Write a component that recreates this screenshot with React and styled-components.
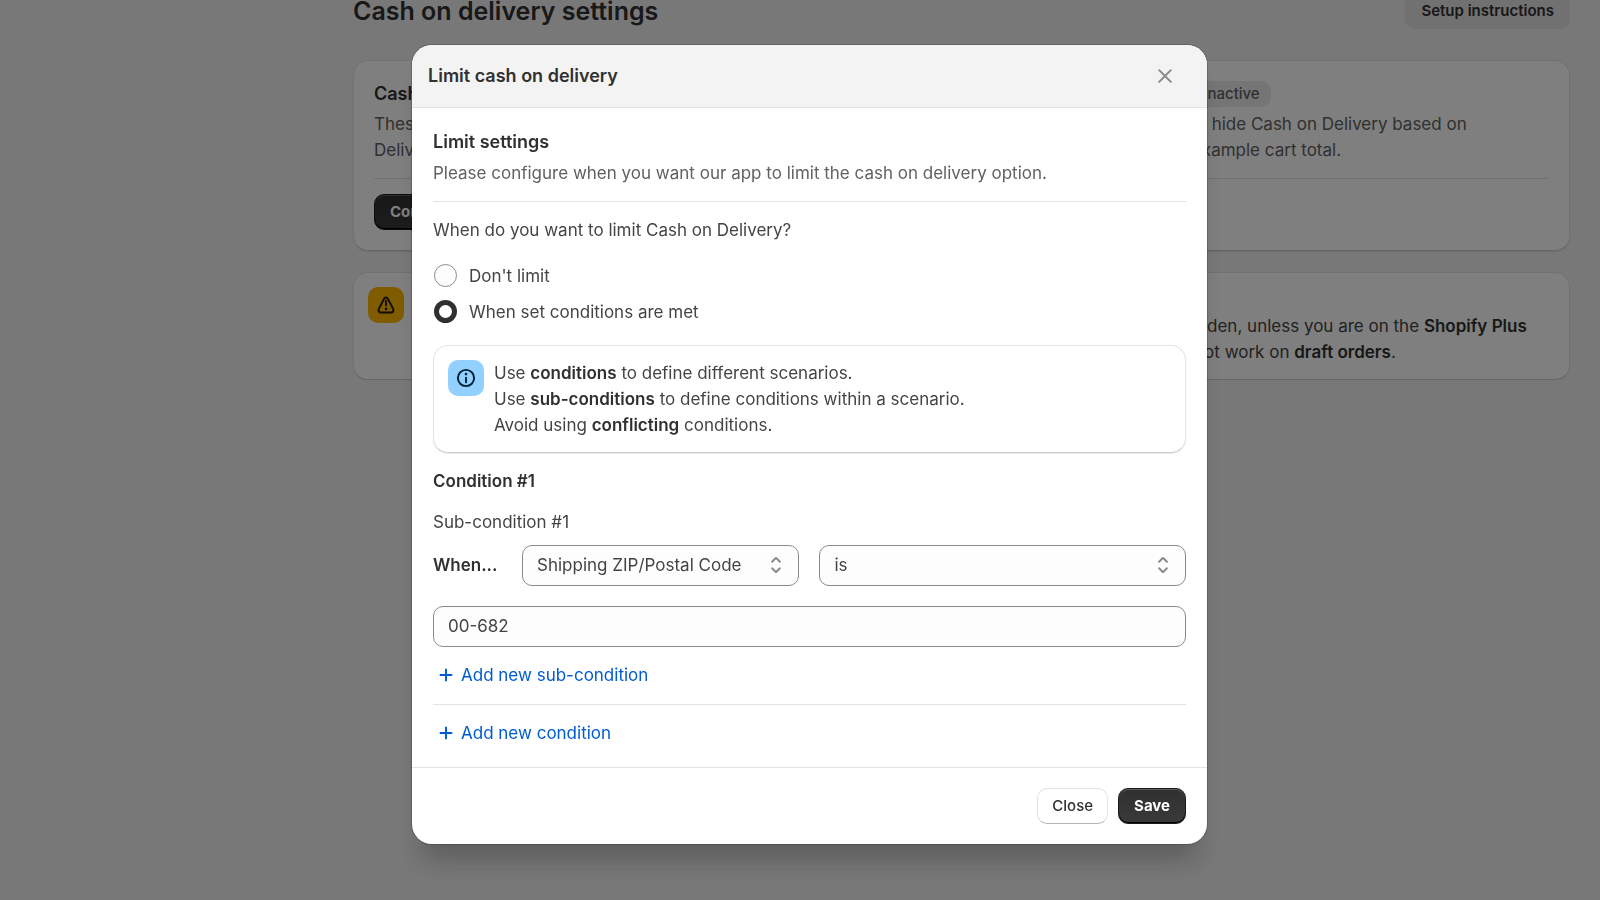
import React, { useState } from 'react'
import styled, { createGlobalStyle, css } from 'styled-components'

function App() {
  const [limit, setLimit] = useState('conditions')
  const [field, setField] = useState('zip')
  const [operator, setOperator] = useState('is')
  const [zip, setZip] = useState('00-682')

  return (
    <>
      <GlobalStyle />
      <Page>
        <PageHeader>
          <PageTitle>Cash on delivery settings</PageTitle>
          <SetupButton type="button">Setup instructions</SetupButton>
        </PageHeader>

        <Cards>
          <Card>
            <CardHeading>
              <Heading>Cash on delivery fees</Heading>
            </CardHeading>
            <CardText>
              These settings let you add a fee to the Cash on<br />
              Delivery payment method in your checkout.
            </CardText>
            <Divider />
            <div>
              <Button type="button" $primary>Configure</Button>
            </div>
          </Card>
          <Card>
            <CardHeading>
              <Heading>Limit cash on delivery</Heading>
              <Badge>Inactive</Badge>
            </CardHeading>
            <CardText>
              Choose conditions used to hide Cash on Delivery based on<br />
              conditions you enter, for example cart total.
            </CardText>
            <Divider />
          </Card>
        </Cards>

        <Banner>
          <IconTile $tone="warning"><AlertIcon /></IconTile>
          <BannerText>
            <strong>Important information</strong><br />
            When using our saved fees, the default Cash on Delivery payment method will automatically be hidden, unless you are on the <strong>Shopify Plus</strong><br />
            plan. Please also note that the costs and limits that are configured in this application currently do not work on <strong>draft orders</strong>.
          </BannerText>
        </Banner>
      </Page>

      <Overlay>
        <Modal role="dialog" aria-modal="true" aria-labelledby="modal-title">
          <ModalHeader>
            <ModalTitle id="modal-title">Limit cash on delivery</ModalTitle>
            <IconButton type="button" aria-label="Close dialog"><XIcon /></IconButton>
          </ModalHeader>

          <ModalBody>
            <Intro>
              <Heading>Limit settings</Heading>
              <CardText>Please configure when you want our app to limit the cash on delivery option.</CardText>
            </Intro>
            <Divider />
            <p id="limit-question">When do you want to limit Cash on Delivery?</p>
            <RadioGroup role="radiogroup" aria-labelledby="limit-question">
              <RadioLabel>
                <Radio name="limit" checked={limit === 'none'} onChange={() => setLimit('none')} />
                Don't limit
              </RadioLabel>
              <RadioLabel>
                <Radio name="limit" checked={limit === 'conditions'} onChange={() => setLimit('conditions')} />
                When set conditions are met
              </RadioLabel>
            </RadioGroup>

            <Banner>
              <IconTile $tone="info"><InfoIcon /></IconTile>
              <BannerText>
                Use <strong>conditions</strong> to define different scenarios.<br />
                Use <strong>sub-conditions</strong> to define conditions within a scenario.<br />
                Avoid using <strong>conflicting</strong> conditions.
              </BannerText>
            </Banner>

            <ConditionTitle>Condition #1</ConditionTitle>
            <SubCondition>
              <p>Sub-condition #1</p>
              <Fields>
                <FieldLabel htmlFor="field">When...</FieldLabel>
                <SelectBox>
                  <Select id="field" value={field} onChange={(e) => setField(e.target.value)}>
                    <option value="zip">Shipping ZIP/Postal Code</option>
                    <option value="country">Shipping Country</option>
                    <option value="total">Cart total</option>
                  </Select>
                  <SelectIcon />
                </SelectBox>
                <SelectBox>
                  <Select aria-label="Operator" value={operator} onChange={(e) => setOperator(e.target.value)}>
                    <option value="is">is</option>
                    <option value="not">is not</option>
                  </Select>
                  <SelectIcon />
                </SelectBox>
                <TextInput aria-label="Value" value={zip} onChange={(e) => setZip(e.target.value)} />
              </Fields>
            </SubCondition>
            <LinkButton type="button"><PlusIcon />Add new sub-condition</LinkButton>
            <Divider />
            <LinkButton type="button"><PlusIcon />Add new condition</LinkButton>
          </ModalBody>

          <ModalFooter>
            <Button type="button">Close</Button>
            <Button type="button" $primary>Save</Button>
          </ModalFooter>
        </Modal>
      </Overlay>
    </>
  )
}

const XIcon = () => (
  <Icon viewBox="0 0 20 20">
    <path d="M13.97 15.03a.75.75 0 1 0 1.06-1.06l-3.97-3.97 3.97-3.97a.75.75 0 0 0-1.06-1.06l-3.97 3.97-3.97-3.97a.75.75 0 0 0-1.06 1.06l3.97 3.97-3.97 3.97a.75.75 0 1 0 1.06 1.06l3.97-3.97 3.97 3.97Z" />
  </Icon>
)

const PlusIcon = () => (
  <Icon viewBox="0 0 20 20">
    <path d="M10.75 5.75a.75.75 0 0 0-1.5 0v3.5h-3.5a.75.75 0 0 0 0 1.5h3.5v3.5a.75.75 0 0 0 1.5 0v-3.5h3.5a.75.75 0 0 0 0-1.5h-3.5v-3.5Z" />
  </Icon>
)

const InfoIcon = () => (
  <Icon viewBox="0 0 20 20">
    <path d="M10 14a.75.75 0 0 1-.75-.75v-3.5a.75.75 0 0 1 1.5 0v3.5a.75.75 0 0 1-.75.75Z" />
    <path d="M9 7a1 1 0 1 1 2 0 1 1 0 0 1-2 0Z" />
    <path fillRule="evenodd" d="M17 10a7 7 0 1 1-14 0 7 7 0 0 1 14 0Zm-1.5 0a5.5 5.5 0 1 1-11 0 5.5 5.5 0 0 1 11 0Z" />
  </Icon>
)

const AlertIcon = () => (
  <Icon viewBox="0 0 20 20">
    <path d="M10 6a.75.75 0 0 1 .75.75v3.5a.75.75 0 0 1-1.5 0v-3.5a.75.75 0 0 1 .75-.75Z" />
    <path d="M11 13a1 1 0 1 1-2 0 1 1 0 0 1 2 0Z" />
    <path fillRule="evenodd" d="M10 3.5c-1.045 0-1.784.702-2.152 1.447a449.26 449.26 0 0 1-2.005 3.847l-.028.052a403.426 403.426 0 0 0-2.008 3.856c-.372.752-.478 1.75.093 2.614.57.863 1.542 1.184 2.464 1.184h7.272c.922 0 1.895-.32 2.464-1.184.57-.864.465-1.862.093-2.614-.21-.424-1.113-2.147-2.004-3.847l-.032-.061a429.497 429.497 0 0 1-2.005-3.847c-.368-.745-1.107-1.447-2.152-1.447Zm-.808 2.112c.404-.816 1.212-.816 1.616 0 .202.409 1.112 2.145 2.022 3.88a418.904 418.904 0 0 1 2.018 3.875c.404.817 0 1.633-1.212 1.633h-7.272c-1.212 0-1.617-.816-1.212-1.633.202-.408 1.113-2.147 2.023-3.883a421.932 421.932 0 0 0 2.017-3.872Z" />
  </Icon>
)

const SelectIcon = () => (
  <Icon viewBox="0 0 20 20">
    <path d="M10.884 4.323a1.25 1.25 0 0 0-1.768 0l-2.646 2.647a.75.75 0 0 0 1.06 1.06l2.47-2.47 2.47 2.47a.75.75 0 1 0 1.06-1.06l-2.646-2.647Z" />
    <path d="m13.53 13.03-2.646 2.647a1.25 1.25 0 0 1-1.768 0l-2.646-2.647a.75.75 0 0 1 1.06-1.06l2.47 2.47 2.47-2.47a.75.75 0 0 1 1.06 1.06Z" />
  </Icon>
)

const GlobalStyle = createGlobalStyle`
  *, *::before, *::after {
    box-sizing: border-box;
  }
  body {
    margin: 0;
    overflow: hidden;
    background: #f1f1f1;
    color: #444;
    font: 400 17px/26px Inter, sans-serif;
  }
  h1, h2, h3, p {
    margin: 0;
  }
  h1, h2, h3, strong {
    color: #303030;
    font-weight: 600;
  }
  button, input, select {
    font: inherit;
    color: inherit;
  }
`

const Icon = styled.svg`
  width: 26px;
  height: 26px;
  flex-shrink: 0;
  fill: currentColor;
`

/* page behind the modal, scrolled down a little */
const Page = styled.div`
  margin-top: -7px;
  padding: 0 30px 0 353px;
`

const PageHeader = styled.header`
  display: flex;
  align-items: center;
  justify-content: space-between;
  height: 36px;
  margin-bottom: 31px;
`

const PageTitle = styled.h1`
  font-size: 25px;
`

const SetupButton = styled.button`
  height: 36px;
  padding: 0 16px;
  border: 0;
  border-radius: 10px;
  background: #e3e3e3;
  color: #303030;
  font-size: 15px;
  font-weight: 600;
`

const Cards = styled.div`
  display: grid;
  grid-template-columns: 1fr 1fr;
  gap: 20px;
  margin-bottom: 21px;
`

const surface = css`
  background: #fff;
  border: 1px solid #e3e3e3;
  border-bottom-color: #ccc;
  border-radius: 15px;
  box-shadow: 0 1px 1px rgba(26, 26, 26, 0.1);
`

const Card = styled.section`
  ${surface}
  display: flex;
  flex-direction: column;
  gap: 15px;
  padding: 20px;
`

const CardHeading = styled.div`
  display: flex;
  align-items: center;
  gap: 10px;
  margin-bottom: -11px;
`

const Heading = styled.h2`
  font-size: 18px;
`

const CardText = styled.p`
  color: #616161;
  white-space: nowrap;
`

const Badge = styled.span`
  padding: 0 11px;
  border-radius: 10px;
  background: #ebebeb;
  color: #616161;
  font-size: 15px;
  font-weight: 500;
`

const Divider = styled.hr`
  width: 100%;
  margin: 0;
  border: 0;
  border-top: 1px solid #e3e3e3;
`

const Button = styled.button`
  height: 36px;
  padding: 0 14px;
  border: 1px solid #e3e3e3;
  border-bottom-color: #b5b5b5;
  border-radius: 10px;
  background: #fff;
  color: #303030;
  font-size: 15px;
  font-weight: 500;
  cursor: pointer;

  ${(p) => p.$primary && css`
    padding: 0 15px;
    border: 1px solid #1a1a1a;
    background: linear-gradient(#303030, #3a3a3a);
    box-shadow: inset 0 1px 0 #5c5c5c, inset 0 -1px 0 #000;
    color: #fff;
    font-weight: 700;
  `}
`

const Banner = styled.section`
  ${surface}
  display: flex;
  gap: 10px;
  padding: 14px;
`

const IconTile = styled.div`
  display: flex;
  align-items: center;
  justify-content: center;
  flex-shrink: 0;
  width: 36px;
  height: 36px;
  border-radius: 10px;
  background: ${(p) => (p.$tone === 'info' ? '#91d0ff' : '#ffb800')};
  color: ${(p) => (p.$tone === 'info' ? '#002133' : '#251a00')};
`

const BannerText = styled.p`
  white-space: nowrap;
`

const Overlay = styled.div`
  position: fixed;
  inset: 0;
  display: flex;
  align-items: center;
  justify-content: center;
  padding: 0 0 12px 19px;
  background: rgba(0, 0, 0, 0.5);
`

const Modal = styled.div`
  width: 100%;
  max-width: 795px;
  overflow: hidden;
  border-radius: 20px;
  background: #fff;
  box-shadow: 0 26px 26px -10px rgba(26, 26, 26, 0.28), 0 0 1px 1px rgba(0, 0, 0, 0.2);
`

const ModalHeader = styled.header`
  display: flex;
  align-items: center;
  justify-content: space-between;
  height: 63px;
  padding: 0 29px 0 16px;
  border-bottom: 1px solid #e3e3e3;
  background: #f3f3f3;
`

const ModalTitle = styled(Heading)``

const IconButton = styled.button`
  display: flex;
  padding: 0;
  border: 0;
  background: none;
  color: #8a8a8a;
  cursor: pointer;
`

const ModalBody = styled.div`
  display: flex;
  flex-direction: column;
  gap: 15px;
  padding: 21px 21px 20px;
`

const Intro = styled.div`
  display: flex;
  flex-direction: column;
  gap: 5px;
`

const RadioGroup = styled.div`
  display: flex;
  flex-direction: column;
`

const RadioLabel = styled.label`
  display: flex;
  align-items: center;
  gap: 12px;
  height: 36px;
  padding-left: 1px;
`

const Radio = styled.input.attrs({ type: 'radio' })`
  appearance: none;
  width: 23px;
  height: 23px;
  margin: 0;
  border: 1px solid #8a8a8a;
  border-radius: 50%;
  background: #fdfdfd;

  &:checked {
    border: 5px solid #303030;
    background: #fff;
  }
`

const ConditionTitle = styled.h3`
  font-size: 17px;
`

const SubCondition = styled.div`
  display: flex;
  flex-direction: column;
  gap: 10px;
`

const Fields = styled.div`
  display: grid;
  grid-template-columns: 69px 277fr 366fr;
  align-items: center;
  gap: 20px;
`

const FieldLabel = styled.label`
  color: #303030;
  font-weight: 600;
`

const SelectBox = styled.div`
  display: grid;
  align-items: center;

  > * {
    grid-area: 1 / 1;
  }
  svg {
    justify-self: end;
    margin-right: 10px;
    color: #8a8a8a;
    pointer-events: none;
  }
`

const field = css`
  width: 100%;
  height: 41px;
  padding: 0 14px;
  border: 1px solid #8a8a8a;
  border-radius: 10px;
  background: #fdfdfd;
`

const Select = styled.select`
  ${field}
  appearance: none;
`

const TextInput = styled.input`
  ${field}
  grid-column: 1 / -1;
`

const LinkButton = styled.button`
  display: flex;
  align-items: center;
  align-self: flex-start;
  gap: 2px;
  height: 27px;
  padding: 0;
  border: 0;
  background: none;
  color: #005bd3;
  cursor: pointer;
`

const ModalFooter = styled.footer`
  display: flex;
  justify-content: flex-end;
  gap: 10px;
  padding: 20px 21px;
  border-top: 1px solid #e3e3e3;
`

export default App
